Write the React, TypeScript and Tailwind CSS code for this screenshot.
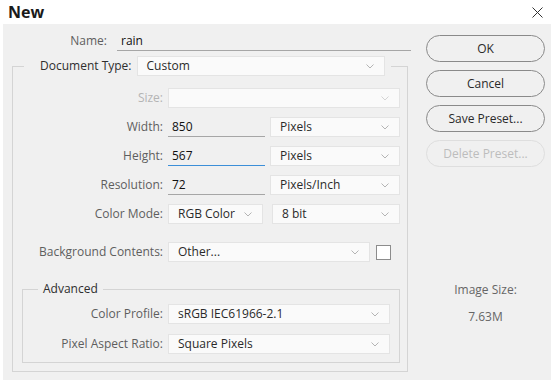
import React from "react";

const FONT = "font-['Open_Sans',sans-serif]";

function Chevron({ light }: { light?: boolean }) {
  return (
    <svg width="8" height="5" viewBox="0 0 8 5" className="shrink-0">
      <path d="M0.5 0.5 L4 4 L7.5 0.5" fill="none" stroke={light ? "#d4d4d4" : "#b4b4b4"} strokeWidth="1" />
    </svg>
  );
}

function Select({ w, text, disabled }: { w: string; text?: string; disabled?: boolean }) {
  return (
    <div
      className={`${w} flex h-[20px] shrink-0 items-center justify-between border border-[#e4e4e4] bg-[#fafafa] pl-[9px] pr-[10px] text-[12px] text-[#2a2a2a]`}
    >
      <span className="leading-none">{text}</span>
      <Chevron light={disabled} />
    </div>
  );
}

function Field({ w, text, focus }: { w: string; text: string; focus?: boolean }) {
  return (
    <div
      className={`${w} flex h-[20px] shrink-0 items-center border-b pl-[4px] text-[12px] text-[#111] ${
        focus ? "border-[#3c8fd8]" : "border-[#a6a6a6]"
      }`}
    >
      {text}
    </div>
  );
}

function Row({ label, lw, dim, children }: { label: string; lw: string; dim?: boolean; children: React.ReactNode }) {
  return (
    <div className="flex h-[20px] items-center">
      <div className={`${lw} shrink-0 pr-[5px] text-right text-[12px] ${dim ? "text-[#b4b4b4]" : "text-[#5e5e5e]"}`}>
        {label}
      </div>
      {children}
    </div>
  );
}

function Button({ label, disabled }: { label: string; disabled?: boolean }) {
  return (
    <div
      className={`flex h-[27px] w-[119px] items-center justify-center rounded-full border text-[12px] ${
        disabled ? "border-[#dedede] text-[#bdbdbd]" : "border-[#8a8a8a] text-[#2a2a2a]"
      }`}
    >
      {label}
    </div>
  );
}

export default function App() {
  return (
    <div className={`h-[383px] w-[551px] overflow-hidden bg-white ${FONT}`}>
      {/* title bar */}
      <div className="flex h-[24px] items-center justify-between pl-[8px] pr-[8px]">
        <span className="text-[16px] font-bold leading-none text-[#1a1a1a]">New</span>
        <svg width="11" height="11" viewBox="0 0 11 11">
          <path d="M0.5 0.5 L10.5 10.5 M10.5 0.5 L0.5 10.5" stroke="#333" strokeWidth="1" />
        </svg>
      </div>

      <div className="ml-[3px] flex h-[356px] bg-[#f0f0f0]">
        {/* left column */}
        <div className="w-[408px] pl-[9px]">
          <div className="mt-[7px] flex h-[20px] items-center">
            <div className="w-[95px] text-right text-[12px] text-[#5e5e5e]">Name:</div>
            <Field w="ml-[10px] w-[294px]" text="rain" />
          </div>

          <fieldset className="mt-[5px] w-[396px] border border-[#d4d4d4] pb-[8px] pr-[7px]">
            <legend className="ml-[11px] pl-[16px] pr-[6px]">
              <div className="flex items-center">
                <span className="text-[12px] text-[#2e2e2e]">Document Type:</span>
                <div className="ml-[5px]">
                  <Select w="w-[248px]" text="Custom" />
                </div>
              </div>
            </legend>

            <div className="mt-[12px] flex flex-col gap-[9px]">
              <Row label="Size:" lw="w-[155px]" dim>
                <Select w="w-[232px]" disabled />
              </Row>
              <Row label="Width:" lw="w-[155px]">
                <Field w="w-[97px]" text="850" />
                <div className="ml-[5px]">
                  <Select w="w-[130px]" text="Pixels" />
                </div>
              </Row>
              <Row label="Height:" lw="w-[155px]">
                <Field w="w-[97px]" text="567" focus />
                <div className="ml-[5px]">
                  <Select w="w-[130px]" text="Pixels" />
                </div>
              </Row>
              <Row label="Resolution:" lw="w-[155px]">
                <Field w="w-[97px]" text="72" />
                <div className="ml-[5px]">
                  <Select w="w-[130px]" text="Pixels/Inch" />
                </div>
              </Row>
              <Row label="Color Mode:" lw="w-[155px]">
                <Select w="w-[95px]" text="RGB Color" />
                <div className="ml-[9px]">
                  <Select w="w-[128px]" text="8 bit" />
                </div>
              </Row>
              <div className="mt-[9px]">
                <Row label="Background Contents:" lw="w-[155px]">
                  <Select w="w-[202px]" text="Other..." />
                  <div className="ml-[6px] h-[15px] w-[15px] border border-[#8c8c8c] bg-white" />
                </Row>
              </div>
            </div>

            <fieldset className="mt-[18px] ml-[9px] w-[378px] border border-[#d4d4d4] pb-[8px]">
              <legend className="ml-[15px] px-[5px] text-[12px] text-[#2e2e2e]">Advanced</legend>
              <div className="mt-[6px] flex flex-col gap-[10px]">
                <Row label="Color Profile:" lw="w-[145px]">
                  <Select w="w-[222px]" text="sRGB IEC61966-2.1" />
                </Row>
                <Row label="Pixel Aspect Ratio:" lw="w-[145px]">
                  <Select w="w-[222px]" text="Square Pixels" />
                </Row>
              </div>
            </fieldset>
          </fieldset>
        </div>

        {/* right column */}
        <div className="ml-[15px] flex w-[119px] flex-col">
          <div className="mt-[11px] flex flex-col gap-[8px]">
            <Button label="OK" />
            <Button label="Cancel" />
            <Button label="Save Preset..." />
            <Button label="Delete Preset..." disabled />
          </div>
          <div className="mt-[114px] text-center text-[12px] text-[#666]">Image Size:</div>
          <div className="mt-[9px] text-center text-[12px] text-[#666]">7.63M</div>
        </div>
      </div>
    </div>
  );
}
